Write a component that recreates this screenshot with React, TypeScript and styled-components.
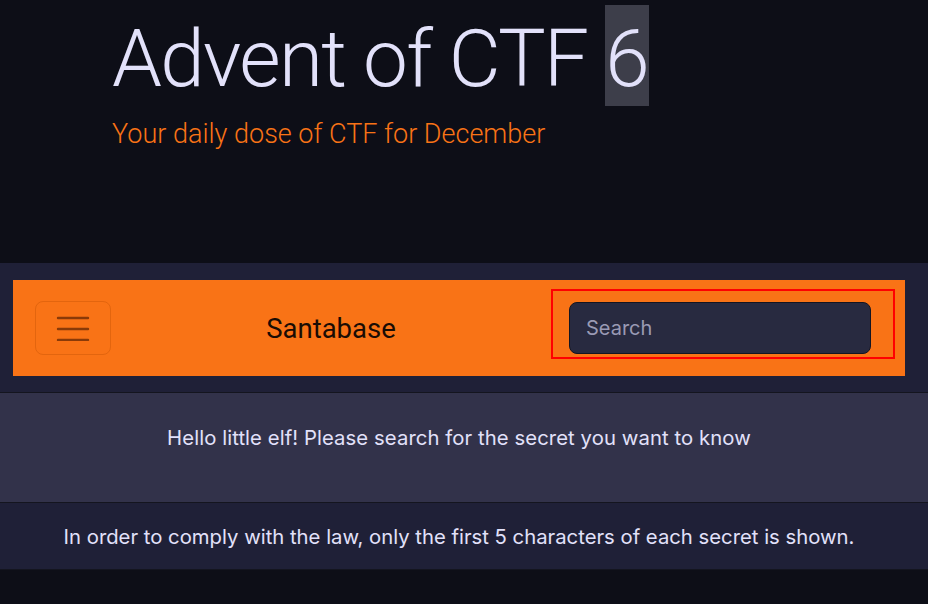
import React from 'react'
import styled, { createGlobalStyle } from 'styled-components'

const GlobalStyle = createGlobalStyle`
  html, body {
    margin: 0;
    padding: 0;
    background: #0d0e17;
  }
  * {
    box-sizing: border-box;
  }
`

const Page = styled.div`
  min-height: 604px;
  background: #0d0e17;
  font-family: Inter, 'Noto Sans', sans-serif;
`

const Hero = styled.header`
  height: 263px;
  padding: 5px 0 0 112px;
`

const Title = styled.h1`
  margin: 0;
  font-family: Roboto, 'Liberation Sans', sans-serif;
  font-weight: 300;
  font-size: 80px;
  letter-spacing: -1.7px;
  line-height: 101px;
  color: #e2e1fa;
`

const Edition = styled.span`
  display: inline-block;
  background: #3d3e4a;
  padding: 8px 0 0;
  line-height: 93px;
  letter-spacing: -1px;
`

const Tagline = styled.p`
  margin: 4px 0 0;
  font-family: Roboto, 'Liberation Sans', sans-serif;
  font-weight: 300;
  font-size: 27px;
  line-height: 40px;
  color: #f97316;
`

const NavSection = styled.section`
  background: #1f2037;
  padding: 17px 23px 16px 13px;
  border-bottom: 1px solid #14151f;
`

const NavBar = styled.nav`
  height: 96px;
  background: #f97316;
  display: flex;
  align-items: center;
  padding: 0 10px 0 22px;
`

const MenuButton = styled.button`
  width: 76px;
  height: 54px;
  border: 1px solid #e3650e;
  border-radius: 8px;
  background: transparent;
  display: flex;
  align-items: center;
  justify-content: center;
  padding: 0;
`

const Brand = styled.div`
  flex: 1;
  text-align: center;
  font-family: Roboto, 'Liberation Sans', sans-serif;
  font-size: 27.5px;
  color: #1a0c04;
`

const SearchForm = styled.form`
  width: 344px;
  height: 70px;
  margin-bottom: 8px;
  border: 2px solid #ff0000;
  padding: 11px 22px 4px 16px;
`

const SearchInput = styled.input`
  display: block;
  width: 100%;
  height: 52px;
  border: 1px solid #141522;
  border-radius: 8px;
  background: #282a40;
  padding: 0 16px;
  font-family: Inter, 'Noto Sans', sans-serif;
  font-size: 20px;
  color: #e2e1fa;
  outline: none;

  &::placeholder {
    color: #9a9ab4;
  }
`

const Notice = styled.div<{ $tone: 'light' | 'dark'; $height: number }>`
  height: ${p => p.$height}px;
  display: flex;
  justify-content: center;
  padding: ${p => (p.$tone === 'light' ? 31 : 20)}px 23px 0 13px;
  background: ${p => (p.$tone === 'light' ? '#32324a' : '#1f2037')};
  border-bottom: 1px solid #14151f;
  color: #e2e1fa;
  font-size: 20.3px;
  letter-spacing: ${p => (p.$tone === 'light' ? 0.08 : 0)}px;
  line-height: 28px;
`

const Hamburger = () => (
  <svg width="34" height="26" viewBox="0 0 34 26">
    <g stroke="#8a3a08" strokeWidth="2.4" strokeLinecap="round">
      <line x1="2" y1="3" x2="32" y2="3" />
      <line x1="2" y1="14" x2="32" y2="14" />
      <line x1="2" y1="25" x2="32" y2="25" />
    </g>
  </svg>
)

const App: React.FC = () => (
  <Page>
    <GlobalStyle />
    <Hero>
      <Title>
        Advent of CTF <Edition>6</Edition>
      </Title>
      <Tagline>Your daily dose of CTF for December</Tagline>
    </Hero>
    <NavSection>
      <NavBar>
        <MenuButton type="button" aria-label="Menu">
          <Hamburger />
        </MenuButton>
        <Brand>Santabase</Brand>
        <SearchForm onSubmit={e => e.preventDefault()}>
          <SearchInput placeholder="Search" />
        </SearchForm>
      </NavBar>
    </NavSection>
    <Notice $tone="light" $height={110}>
      Hello little elf! Please search for the secret you want to know
    </Notice>
    <Notice $tone="dark" $height={67}>
      In order to comply with the law, only the first 5 characters of each secret is shown.
    </Notice>
  </Page>
)

export default App
